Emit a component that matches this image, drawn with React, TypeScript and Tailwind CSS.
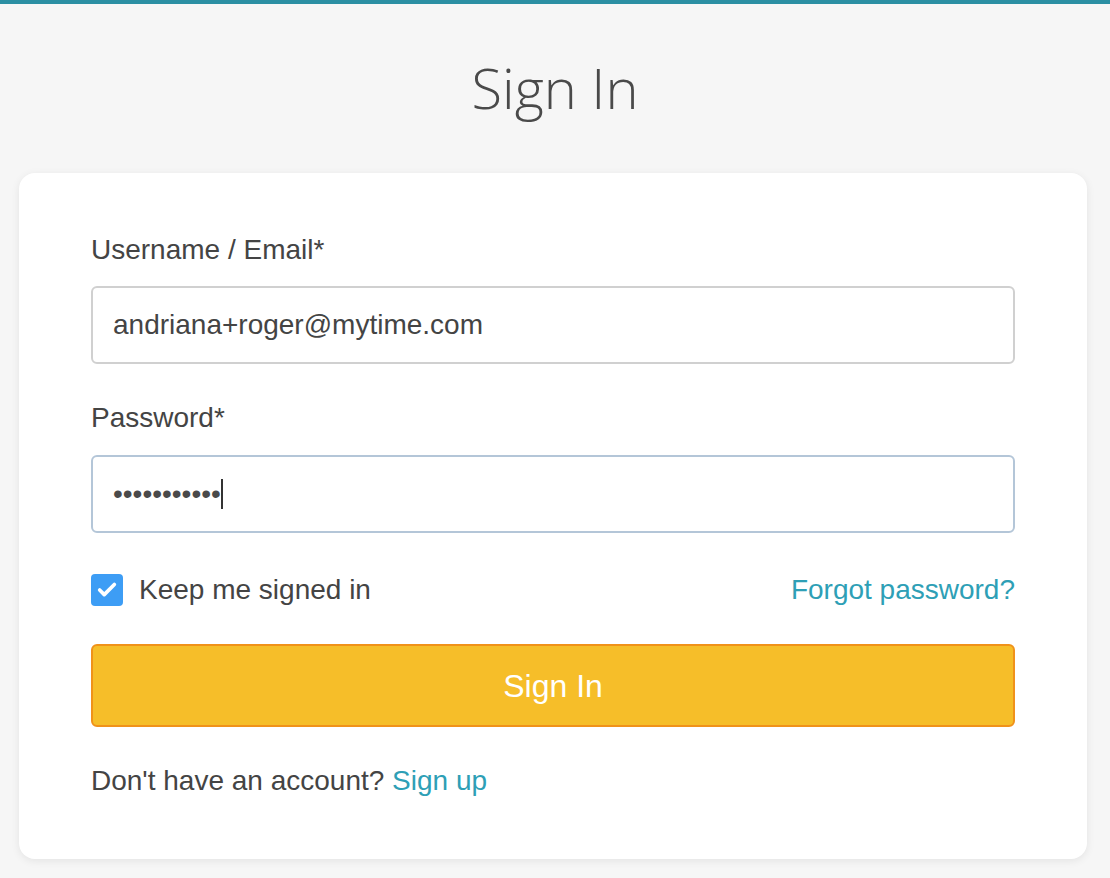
import { Check } from "lucide-react";

export default function App() {
  return (
    <div className="min-h-screen bg-[#f6f6f6] border-t-4 border-[#2b8fa3] font-['Liberation_Sans',Arial,sans-serif] text-[#444]">
      <h1 className="pt-[45px] pb-[48px] text-center font-['Open_Sans',sans-serif] font-light text-[56px] leading-[76px] text-[#4a4a4a]">
        Sign In
      </h1>

      <div className="ml-[19px] mr-[23px] bg-white rounded-2xl shadow-[0_2px_8px_rgba(0,0,0,0.08)] px-[72px] pt-[61px] pb-[62px]">
        <label className="block text-[28px] leading-[32px] mb-[20px]">Username / Email*</label>
        <div className="h-[78px] rounded-md border-2 border-[#d0d0d0] flex items-center px-[20px] text-[28px]">
          andriana+roger@mytime.com
        </div>

        <label className="block text-[28px] leading-[32px] mt-[38px] mb-[21px]">Password*</label>
        <div className="h-[78px] rounded-md border-2 border-[#b4c6d8] flex items-center px-[20px]">
          <span className="text-[28px] leading-[30px] text-[#4a4a4a]">•••••••••••</span>
          <span className="w-[2px] h-[30px] bg-[#333]" />
        </div>

        <div className="flex items-center justify-between mt-[41px] h-[32px]">
          <div className="flex items-center gap-4">
            <span className="w-[32px] h-[32px] rounded bg-[#3d9df5] flex items-center justify-center">
              <Check size={22} strokeWidth={4} className="text-white" />
            </span>
            <span className="text-[28px]">Keep me signed in</span>
          </div>
          <a className="text-[28px] text-[#2e9fb6]">Forgot password?</a>
        </div>

        <button className="mt-[38px] w-full h-[83px] rounded-md bg-[#f6be29] border-2 border-[#f0921a] text-white text-[32px]">
          Sign In
        </button>

        <p className="mt-[38px] text-[28px] leading-[32px]">
          Don't have an account? <a className="text-[#2e9fb6]">Sign up</a>
        </p>
      </div>
    </div>
  );
}
